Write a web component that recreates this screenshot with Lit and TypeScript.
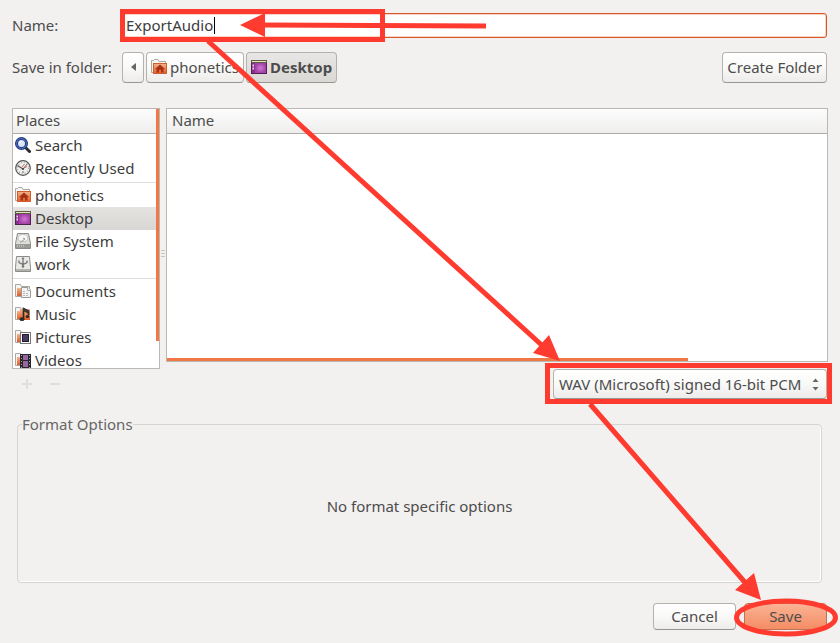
import { LitElement, html, css, svg } from "lit";
import { customElement, property } from "lit/decorators.js";
import { classMap } from "lit/directives/class-map.js";

const folder = svg`
  <path d="M.5 13.500V1.500H5.500L6.500 3.500H14.500V13.500Z" fill="#f6f5f3" stroke="#aaa7a0"/>
  <path d="M2 13V5H6V13Z" fill="url(#orange)"/>`;

const icons: Record<string, unknown> = {
  search: svg`
    <path d="M11 11L14.500 14.500" stroke="#2b2b33" stroke-width="3" stroke-linecap="round"/>
    <circle cx="6.500" cy="6.500" r="5" fill="#dbe6f8" stroke="#1c3173" stroke-width="3"/>
    <circle cx="6.500" cy="6.500" r="5" fill="none" stroke="#4464b4" stroke-width="1.400"/>
    <path d="M4.500 6Q5 4.500 7 4.300" stroke="#fff" stroke-width="1.300" fill="none"/>`,
  recent: svg`
    <circle cx="8" cy="8" r="7.300" fill="#efefed" stroke="#55534f" stroke-width="1.200"/>
    <circle cx="8" cy="8" r="5.500" fill="none" stroke="#a5a5a3" stroke-width="1.200" stroke-dasharray="1 1.900"/>
    <path d="M2.500 5.500L8 9" stroke="#555" stroke-width="1.200" fill="none"/>
    <path d="M8 9L12.500 3.500" stroke="#666" fill="none"/>
    <path d="M7 7L9.500 4M9 8L12 6.500" stroke="#d9594c" stroke-width=".9" fill="none"/>
    <circle cx="8" cy="9" r="1.100" fill="#444"/>
    <path d="M8 11V13" stroke="#777"/>`,
  home: svg`
    <path d="M.5 13.500V1.500H2.500L3.500 .5H7L8 2.500H14.500V13.500Z" fill="#f6f5f3" stroke="#aaa7a0"/>
    <rect x="2.500" y="4.500" width="13" height="10" fill="url(#orange)" stroke="#cf5e30"/>
    <path d="M9 5.500L4 10H5.500V13.500H8V11H10V13.500H12.500V10H14Z" fill="#a83216"/>`,
  desktop: svg`
    <rect x=".5" y="1.500" width="15" height="13" fill="#8d2f90" stroke="#4d2450"/>
    <rect x="4" y="4" width="11" height="10" fill="url(#purple)"/>
    <rect x="0" y="1" width="16" height="3" fill="#5d5b42"/>
    <rect x="1" y="2" width="14" height="1" fill="#e5e3bd"/>
    <path d="M1.500 5.500H3V7.500H1.500ZM1.500 8.500H3V10.500H1.500Z" fill="#f0dcf1"/>`,
  disk: svg`
    <path d="M2.500 .5H13.500L15.500 10.500V15.500H.5V10.500Z" fill="#dededc" stroke="#8b8b88"/>
    <ellipse cx="8" cy="5" rx="5" ry="3.700" fill="#f7f7f6" stroke="#c2c2bf"/>
    <path d="M8 5L10 6L5 9.500" stroke="#999" fill="none"/>
    <rect x="1" y="11" width="14" height="4" fill="#9a9a97"/>
    <path d="M2 13H10" stroke="#d5d5d2" stroke-dasharray="1 1"/>`,
  usb: svg`
    <path d="M1.500 .5H14.500L15.500 11.500V15.500H.5V11.500Z" fill="#e9e9e7" stroke="#8b8b88"/>
    <path d="M8 2V11M4 4.500V6.500L8 8.500L12 6.500V4.500" stroke="#777" stroke-width="1.300" fill="none"/>
    <path d="M6.500 3L8 1L9.500 3Z" fill="#777"/>
    <circle cx="8" cy="10.500" r="1.300" fill="#777"/>
    <path d="M1 14H15" stroke="#b3b3b0" stroke-width="2"/>`,
  documents: svg`${folder}
    <path d="M6.500 4.500H13L15.500 7V14.500H6.500Z" fill="#f3f3f1" stroke="#999"/>
    <path d="M12.500 4.500V7.500H15.500" fill="#fff" stroke="#aaa"/>
    <path d="M8 8.500H11M8 10.500H14M8 12.500H14" stroke="#b5b5b3" stroke-dasharray="2 1"/>`,
  music: svg`${folder}
    <rect x="5" y="3" width="10" height="11" fill="url(#orange)"/>
    <path d="M8.500 13V2.500L13.500 5V9" stroke="#2a2a2a" stroke-width="1.600" fill="none"/>
    <path d="M8 2L14 5V8L8 5Z" fill="#3a3432"/>
    <ellipse cx="7" cy="13.200" rx="2.400" ry="1.900" fill="#2a2a2a"/>
    <ellipse cx="12.500" cy="10.500" rx="1.800" ry="1.500" fill="#2a2a2a"/>`,
  pictures: svg`${folder}
    <rect x="5.500" y="3.500" width="10" height="11" fill="#fff" stroke="#777"/>
    <rect x="7" y="5" width="7" height="8" fill="#221d2e"/>
    <rect x="8" y="6" width="5" height="6" fill="#4a3d63"/>`,
  videos: svg`${folder}
    <rect x="5" y="2" width="11" height="14" fill="#2b2530"/>
    <path d="M8 3H13V8H8ZM8 9H13V15H8Z" fill="#93689f"/>
    <path d="M6.500 3V16M14.500 3V16" stroke="#aaa" stroke-dasharray="1 2"/>`,
};

@customElement("place-icon")
export class PlaceIcon extends LitElement {
  @property() name = "";
  static styles = css`
    :host { display: block; flex: none; width: 16px; height: 16px; }
    svg { display: block; }
  `;
  render() {
    return html`<svg width="16" height="16" viewBox="0 0 16 16" aria-hidden="true">
      <defs>
        <linearGradient id="orange" x1="0" y1="0" x2="0" y2="1">
          <stop offset="0" stop-color="#f4b48c" /><stop offset="1" stop-color="#e05a22" />
        </linearGradient>
        <radialGradient id="purple">
          <stop offset="0" stop-color="#d07ad2" /><stop offset="1" stop-color="#a440a8" />
        </radialGradient>
      </defs>
      ${icons[this.name]}
    </svg>`;
  }
}

const groups = [
  [["search", "Search"], ["recent", "Recently Used"]],
  [["home", "phonetics"], ["desktop", "Desktop"], ["disk", "File System"], ["usb", "work"]],
  [["documents", "Documents"], ["music", "Music"], ["pictures", "Pictures"], ["videos", "Videos"]],
];

@customElement("app-root")
export class AppRoot extends LitElement {
  static styles = css`
    :host {
      display: block;
      position: relative;
      color: #4c4c4c;
      background: #f2f1f0;
      font: 15px/20px "Noto Sans", "Open Sans", sans-serif;
    }
    * { box-sizing: border-box; }
    form {
      display: flex;
      flex-direction: column;
      min-height: 100vh;
      padding: 13px 12px;
    }
    button, input, select { font: inherit; color: inherit; margin: 0; }
    button, select {
      border: 1px solid #b5b2ae;
      border-bottom-color: #989592;
      border-radius: 4px;
      background: linear-gradient(#ffffff, #f9f9f8 50%, #edecea);
      padding: 0 4px 1px;
      white-space: nowrap;
    }
    .fields {
      display: grid;
      grid-template-columns: 108px 1fr;
      align-items: center;
      row-gap: 14px;
      padding-right: 1px;
    }
    .field-label { padding-bottom: 1px; }
    .entry { position: relative; display: flex; }
    .name {
      width: 100%;
      height: 25px;
      padding: 0 5px 1px;
      border: 1px solid #d5582a;
      border-radius: 3px;
      box-shadow: inset 0 0 0 1px #fbd3c2;
      background: #fff;
      outline: none;
      color: #3c3c3c;
    }
    .caret { position: absolute; left: 94px; top: 4px; width: 1px; height: 17px; background: #000; }
    .path { display: flex; gap: 2px; padding-left: 2px; }
    .path button { display: flex; align-items: center; gap: 3px; height: 31px; }
    .path .back { width: 22px; justify-content: center; }
    .path .current { font-weight: bold; background: linear-gradient(#e9e7e5, #dad8d5); }
    .path .create { margin-left: auto; }
    .browser {
      display: grid;
      grid-template-columns: 148px 6px 1fr;
      margin-top: 25px;
    }
    .pane { position: relative; background: #fff; border: 1px solid #bbb8b4; overflow: hidden; }
    .places { height: 261px; }
    .files { height: 254px; }
    .heading {
      height: 25px;
      padding: 1px 3px;
      border-bottom: 1px solid #aeaba8;
      background: linear-gradient(#fdfdfd, #efeeed);
    }
    .files .heading { padding: 1px 5px; }
    .bar-v { position: absolute; top: 0; right: 0; width: 3px; height: 232px; background: #f07746; }
    .bar-h { position: absolute; left: 0; bottom: 0; height: 3px; width: 79%; background: #f07746; }
    ul { list-style: none; margin: 0; padding: 0; }
    ul + ul { border-top: 1px solid #dfdddb; margin-top: 2px; padding-top: 1px; }
    li { display: flex; align-items: center; gap: 4px; height: 23px; padding: 0 0 1px 2px; color: #3c3c3c; }
    li.selected { background: linear-gradient(#e4e3e1, #d9d7d4); }
    .grip { align-self: center; display: grid; gap: 2px; justify-content: center; }
    .grip i { width: 4px; height: 1px; background: #c9c7c4; }
    .edit { display: flex; gap: 4px; padding: 3px; }
    .edit button { width: 24px; height: 24px; border: 0; padding: 0; background: none; }
    .edit svg { display: block; margin: auto; }
    .format { position: relative; width: 274px; margin: 7px 1px 0 auto; }
    .format select { display: block; width: 100%; height: 30px; padding: 0 5px 1px; appearance: none; }
    .format svg { position: absolute; right: 8px; top: 9px; pointer-events: none; }
    fieldset {
      flex: 1;
      min-width: 0;
      margin: 15px 6px 20px 5px;
      padding: 0;
      border: 1px solid #d6d4d1;
      border-radius: 4px;
      box-shadow: inset -1px -1px #fff;
    }
    legend { padding: 0; margin-left: 4px; color: #666; }
    .note { margin: 0; padding: 62px 0; text-align: center; }
    .actions { display: flex; justify-content: flex-end; gap: 8px; padding-right: 1px; }
    .actions button { width: 83px; height: 27px; }
    .actions .save { background: linear-gradient(#fbb294, #f48d64); border-color: #bd7355; }
    .marks { position: absolute; inset: 0; width: 100%; height: 100%; pointer-events: none; }
  `;

  render() {
    return html`
      <form @submit=${(e: Event) => e.preventDefault()}>
        <div class="fields">
          <label class="field-label" for="name">Name:</label>
          <div class="entry">
            <input class="name" id="name" value="ExportAudio" />
            <span class="caret" aria-hidden="true"></span>
          </div>
          <span class="field-label">Save in folder:</span>
          <div class="path">
            <button type="button" class="back" aria-label="Back">
              <svg width="5" height="8" viewBox="0 0 5 8"><path d="M5 0V8L0 4Z" fill="#666" /></svg>
            </button>
            <button type="button"><place-icon name="home"></place-icon>phonetics</button>
            <button type="button" class="current"><place-icon name="desktop"></place-icon>Desktop</button>
            <button type="button" class="create">Create Folder</button>
          </div>
        </div>
        <div class="browser">
          <div>
            <div class="pane places">
              <div class="heading">Places</div>
              ${groups.map((g) => html`<ul>
                ${g.map(([icon, label]) => html`<li class=${classMap({ selected: icon === "desktop" })}>
                  <place-icon name=${icon}></place-icon>${label}</li>`)}
              </ul>`)}
              <div class="bar-v"></div>
            </div>
            <div class="edit">
              <button type="button" disabled aria-label="Add">
                <svg width="10" height="10"><path d="M0 5H10M5 0V10" stroke="#e0dedc" stroke-width="2" /></svg>
              </button>
              <button type="button" disabled aria-label="Remove">
                <svg width="10" height="10"><path d="M0 5H10" stroke="#e0dedc" stroke-width="2" /></svg>
              </button>
            </div>
          </div>
          <div class="grip"><i></i><i></i><i></i></div>
          <div>
            <div class="pane files">
              <div class="heading">Name</div>
              <div class="bar-h"></div>
            </div>
            <div class="format">
              <select aria-label="Format"><option>WAV (Microsoft) signed 16-bit PCM</option></select>
              <svg width="7" height="13" viewBox="0 0 7 13"><path d="M.5 4L3.500 .5L6.500 4ZM.5 9L3.500 12.500L6.500 9Z" fill="#666" /></svg>
            </div>
          </div>
        </div>
        <fieldset>
          <legend>Format Options</legend>
          <p class="note">No format specific options</p>
        </fieldset>
        <div class="actions">
          <button type="button">Cancel</button>
          <button type="submit" class="save">Save</button>
        </div>
      </form>
      <svg class="marks" viewBox="0 0 840 643" preserveAspectRatio="none" aria-hidden="true">
        <g fill="none" stroke="#ff3b30" stroke-width="5">
          <rect x="122.500" y="11.500" width="260" height="28" />
          <path d="M486 26L262 25" />
          <path d="M208 41L546 349" />
          <rect x="547.500" y="365.500" width="282" height="36" />
          <path d="M590 404L749 587" />
          <ellipse cx="786" cy="617.500" rx="49.500" ry="16.500" />
        </g>
        <path d="M240 25L265 13V37ZM560 361L549 335L533 353ZM761 600L754 573L735 590Z" fill="#ff3b30" />
      </svg>`;
  }
}
